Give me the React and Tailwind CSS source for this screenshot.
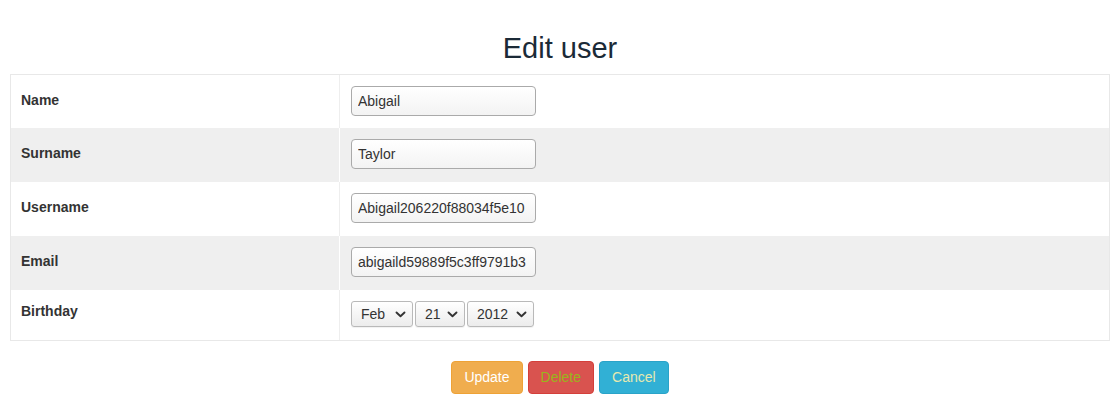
const rows = [
  { label: 'Name', value: 'Abigail' },
  { label: 'Surname', value: 'Taylor' },
  { label: 'Username', value: 'Abigail206220f88034f5e10' },
  { label: 'Email', value: 'abigaild59889f5c3ff9791b3' },
];

const Chevron = () => (
  <svg width="11" height="7" viewBox="0 0 11 7" className="shrink-0">
    <polyline points="1.5,1.5 5.5,5.2 9.5,1.5" fill="none" stroke="#333" strokeWidth="1.9" strokeLinecap="round" strokeLinejoin="round" />
  </svg>
);

const FakeSelect = ({ text, width }) => (
  <div
    className={`flex items-center justify-between h-[26px] ${width} pl-[9px] pr-[6px] border border-[#b9b9b9] rounded-[3px] bg-gradient-to-b from-white to-[#ececec] text-[14px] text-[#333] shadow-[0_1px_1px_rgba(0,0,0,0.06)]`}
  >
    <span>{text}</span>
    <Chevron />
  </div>
);

export default function App() {
  return (
    <div className="min-h-screen bg-white font-['Liberation_Sans',Arial,sans-serif] text-[14px] text-[#333]">
      <h2 className="pt-[32px] mb-[9px] text-center text-[29px] leading-[33px] text-[#1b2a37]">Edit user</h2>

      <div className="mx-[10px] border border-[#e8e8e8]">
        {rows.map((row, i) => {
          const gray = i % 2 === 1;
          return (
            <div key={row.label} className={`flex h-[54px] first:h-[53px] ${gray ? 'bg-[#efefef]' : 'bg-white'}`}>
              <div className={`w-[329px] shrink-0 pl-[10px] pt-[15px] font-bold leading-5 border-r ${gray ? 'border-white' : 'border-[#eeeeee]'}`}>
                {row.label}
              </div>
              <div className="pl-[11px] pt-[11px]">
                <input
                  readOnly
                  value={row.value}
                  className="h-[30px] w-[185px] px-[6px] border border-[#aaa] rounded-[4px] bg-gradient-to-b from-white to-[#f3f3f3] text-[14px] text-[#333] outline-none"
                />
              </div>
            </div>
          );
        })}
        <div className="flex h-[50px] bg-white">
          <div className="w-[329px] shrink-0 pl-[10px] pt-[11px] font-bold leading-5 border-r border-[#eeeeee]">Birthday</div>
          <div className="flex gap-[2px] pl-[11px] pt-[11px]">
            <FakeSelect text="Feb" width="w-[62px]" />
            <FakeSelect text="21" width="w-[50px]" />
            <FakeSelect text="2012" width="w-[67px]" />
          </div>
        </div>
      </div>

      <div className="flex justify-center gap-[5px] mt-[20px]">
        <button className="h-[33px] px-3 border border-[#eea236] rounded-[4px] bg-[#f0ad4e] text-white text-[14px]">Update</button>
        <button className="h-[33px] px-3 border border-[#d43f3a] rounded-[4px] bg-[#d9534f] text-[#9ab51c] text-[14px]">Delete</button>
        <button className="h-[33px] px-3 border border-[#2aa3c8] rounded-[4px] bg-[#31b0d5] text-[#e6e9b0] text-[14px]">Cancel</button>
      </div>
    </div>
  );
}
